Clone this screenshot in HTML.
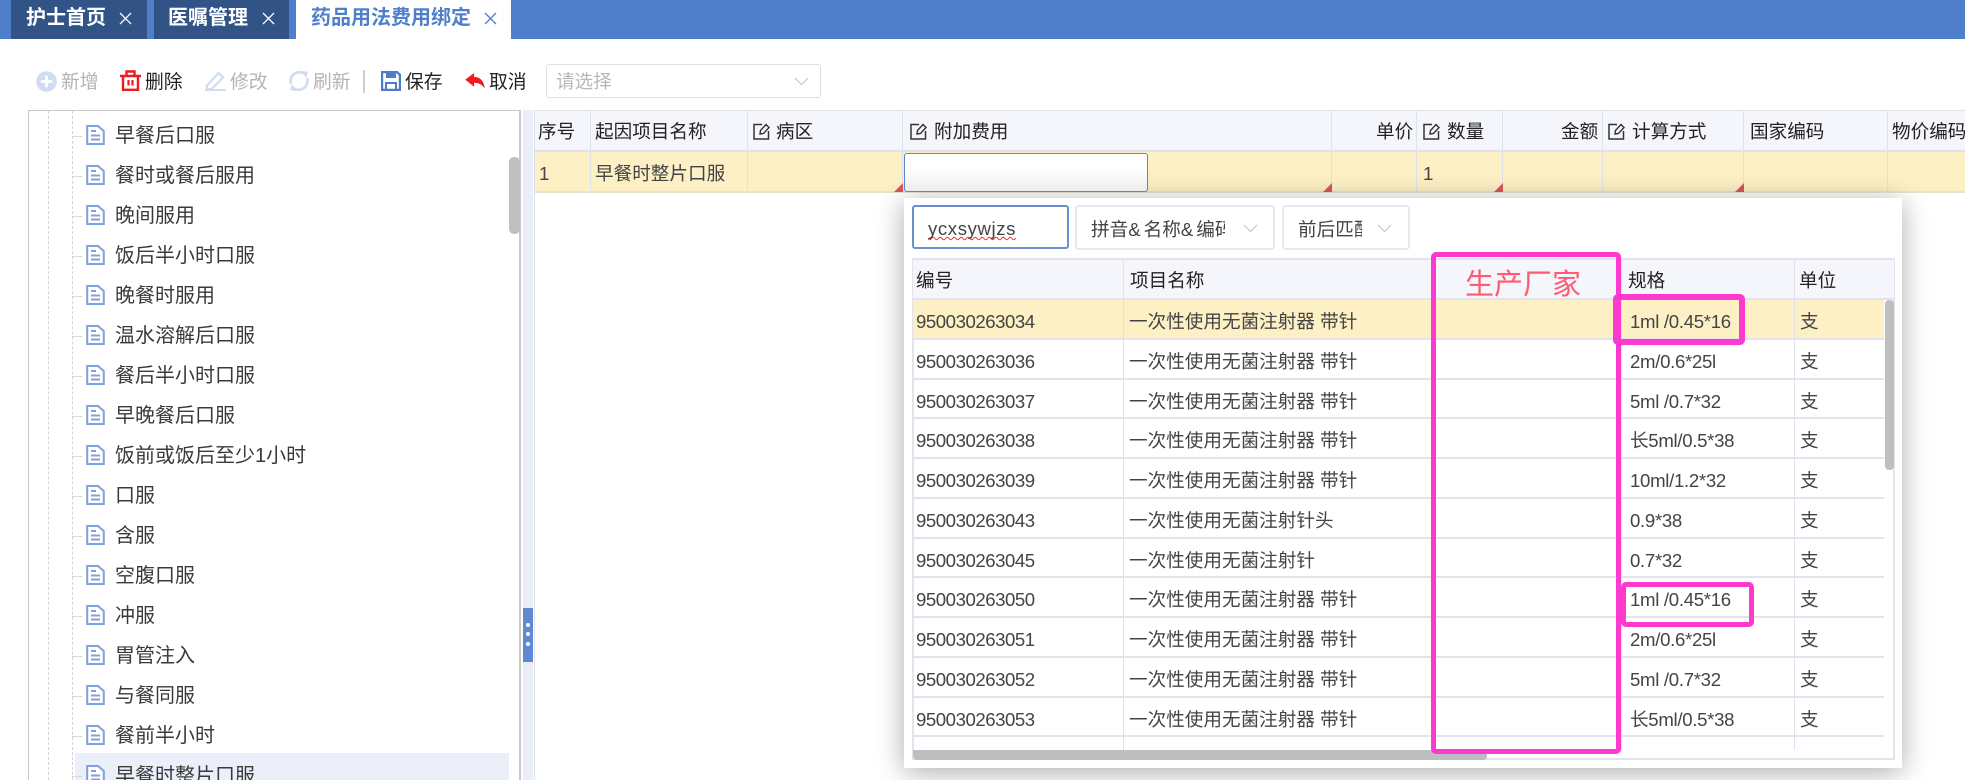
<!DOCTYPE html>
<html lang="zh"><head><meta charset="utf-8"><title>药品用法费用绑定</title>
<style>
html{margin:0;padding:0;width:1965px;height:780px;overflow:hidden;background:#fff}
body{margin:0;padding:0;background:#fff;position:relative;width:1965px;height:780px;overflow:hidden;font-family:"Liberation Sans","Noto Sans CJK SC",sans-serif;font-size:18.6px;color:#333}
div,span,svg{position:absolute;box-sizing:border-box}
i{font-style:normal;letter-spacing:3px}
.t{white-space:nowrap;line-height:24px;height:24px}
.tab{top:0;height:39px;background:#315385}
.tt{top:6px;font-size:20px;font-weight:700;color:#fff}
.tb{font-size:18.8px;top:70px}
.dis{color:#b4b4b4}
.tr{left:115px;font-size:20px;color:#3a3a3a}
.dv{width:0;border-left:1px dashed #d4d4d4}
.dh{left:72px;width:10px;height:0;border-top:1px dashed #d4d4d4}
.ic{left:86px;width:19px;height:20px}
.vl{width:1px;background:#dfe1eb}
.hd{top:120px;color:#222}
.c{top:162px;color:#444}
.red{width:0;height:0;border-style:solid;border-width:0 0 9px 9px;border-color:transparent transparent #d9565a transparent;top:183px}
.r{left:913px;width:971px;height:39.75px;border-bottom:2px solid #e2e3ec;color:#444}
.r span{top:10px;white-space:nowrap;line-height:24px;height:24px}
.a{left:3px;letter-spacing:-.45px}.b{left:216px}.d{left:717px;letter-spacing:-.3px}.e{left:887px}
.pk{border:5px solid #fd3ad0;border-radius:5px}
.sel{border:2px solid #e6e8ef;border-radius:4px;background:#fff}
</style></head><body>
<div style="left:0;top:0;width:1965px;height:39px;background:#4f7fcb"></div>
<div class="tab" style="left:11px;width:136px"></div>
<div class="tab" style="left:154px;width:135px"></div>
<div style="left:296px;top:0;width:215px;height:39px;background:#fff"></div>
<span class="t tt" style="left:26px">护士首页</span>
<span class="t tt" style="left:168px">医嘱管理</span>
<span class="t tt" style="left:311px;color:#4f7fcb">药品用法费用绑定</span>
<svg style="left:119px;top:12px" width="13" height="13" viewBox="0 0 13 13"><path d="M1 1L12 12M12 1L1 12" stroke="#fff" stroke-width="1.3"/></svg>
<svg style="left:262px;top:12px" width="13" height="13" viewBox="0 0 13 13"><path d="M1 1L12 12M12 1L1 12" stroke="#fff" stroke-width="1.3"/></svg>
<svg style="left:484px;top:12px" width="13" height="13" viewBox="0 0 13 13"><path d="M1 1L12 12M12 1L1 12" stroke="#4f7fcb" stroke-width="1.3"/></svg>

<svg style="left:36px;top:71px" width="21" height="21" viewBox="0 0 22 22"><circle cx="11" cy="11" r="10.8" fill="#cfdcf1"/><path d="M11 5V17M5 11H17" stroke="#fff" stroke-width="3"/></svg>
<span class="t tb dis" style="left:61px">新增</span>
<svg style="left:120px;top:70px" width="21" height="21" viewBox="0 0 21 21"><path d="M0 6H21M6.5 6V1.5H14.5V6M3 6V19.8H18V6" fill="none" stroke="#f0191e" stroke-width="2.4"/><path d="M8.5 10V15.5M12.5 10V15.5" stroke="#f0191e" stroke-width="2.2"/></svg>
<span class="t tb" style="left:145px;color:#222">删除</span>
<svg style="left:205px;top:71px" width="21" height="20" viewBox="0 0 21 20"><path d="M2 14.5L13.5 2L18 6.5L6.5 18L1.5 18.5Z" fill="none" stroke="#cfdcf1" stroke-width="2.2"/><path d="M0 19H21" stroke="#cfdcf1" stroke-width="2"/></svg>
<span class="t tb dis" style="left:230px">修改</span>
<svg style="left:288px;top:70px" width="22" height="22" viewBox="0 0 22 22"><path d="M3 14A9 9 0 0 1 17 4M19 8A9 9 0 0 1 5 18" fill="none" stroke="#cfdcf1" stroke-width="2.6"/><path d="M14 1L20 2L18 8ZM8 21L2 20L4 14Z" fill="#cfdcf1"/></svg>
<span class="t tb dis" style="left:313px">刷新</span>
<div style="left:363px;top:70px;width:2px;height:23px;background:#cfcfcf"></div>
<svg style="left:381px;top:71px" width="20" height="20" viewBox="0 0 20 20"><path d="M1 1H16L19 4V19H1Z" fill="none" stroke="#4f7cc6" stroke-width="2.4"/><rect x="5" y="1" width="10" height="6" fill="#4f7cc6"/><rect x="5" y="12" width="10" height="7" fill="none" stroke="#4f7cc6" stroke-width="2"/></svg>
<span class="t tb" style="left:405px;color:#222">保存</span>
<svg style="left:464px;top:73px" width="22" height="16" viewBox="0 0 22 18"><path d="M0 7.5L10 0V4.5C17 4.5 21 9 22 17.5C19 13 15 11 10 11V15.5Z" fill="#f3181d"/></svg>
<span class="t tb" style="left:489px;color:#222">取消</span>
<div style="left:546px;top:64px;width:275px;height:34px;border:1px solid #dcdfe6;border-radius:3px"></div>
<span class="t" style="left:556px;top:70px;color:#b8b8b8;font-size:18.6px">请选择</span>
<svg style="left:794px;top:77px" width="15" height="9" viewBox="0 0 15 9"><path d="M1 1L7.5 7.5L14 1" fill="none" stroke="#c4c7cf" stroke-width="1.2"/></svg>

<div style="left:28px;top:110px;width:493px;height:670px;border:1px solid #c9c9c9;border-width:1px 2px 0 1px"></div>
<div style="left:509px;top:157px;width:11px;height:77px;background:#bfbfbf;border-radius:5px"></div>
<div class="dv" style="left:48px;top:111px;height:669px"></div>
<div class="dv" style="left:72px;top:111px;height:669px"></div>
<div style="left:75px;top:753px;width:434px;height:27px;background:#ebeff9"></div>

<div class="dh" style="top:136px"></div><div class="dh" style="top:176px"></div><div class="dh" style="top:216px"></div><div class="dh" style="top:256px"></div><div class="dh" style="top:296px"></div><div class="dh" style="top:336px"></div><div class="dh" style="top:376px"></div><div class="dh" style="top:416px"></div><div class="dh" style="top:456px"></div><div class="dh" style="top:496px"></div><div class="dh" style="top:536px"></div><div class="dh" style="top:576px"></div><div class="dh" style="top:616px"></div><div class="dh" style="top:656px"></div><div class="dh" style="top:696px"></div><div class="dh" style="top:736px"></div><div class="dh" style="top:776px"></div>

<svg width="0" height="0" style="left:0;top:0"><defs><g id="f"><path d="M1.2 1H12L17.8 6V19H1.2Z" fill="#fff" stroke="#7fa1dd" stroke-width="2"/><path d="M5 6H10M5 10.5H14M5 14.5H14" stroke="#7fa1dd" stroke-width="2"/></g><g id="ed"><path d="M9 1.5H1V16H15.5V8" fill="none" stroke="#333" stroke-width="1.5"/><path d="M7 11L7.5 7.5L13 1.5L16 4.5L10.5 10.5Z" fill="none" stroke="#333" stroke-width="1.4"/></g></defs></svg>
<svg class="ic" style="top:125px" viewBox="0 0 19 20"><use href="#f"/></svg>
<svg class="ic" style="top:165px" viewBox="0 0 19 20"><use href="#f"/></svg>
<svg class="ic" style="top:205px" viewBox="0 0 19 20"><use href="#f"/></svg>
<svg class="ic" style="top:245px" viewBox="0 0 19 20"><use href="#f"/></svg>
<svg class="ic" style="top:285px" viewBox="0 0 19 20"><use href="#f"/></svg>
<svg class="ic" style="top:325px" viewBox="0 0 19 20"><use href="#f"/></svg>
<svg class="ic" style="top:365px" viewBox="0 0 19 20"><use href="#f"/></svg>
<svg class="ic" style="top:405px" viewBox="0 0 19 20"><use href="#f"/></svg>
<svg class="ic" style="top:445px" viewBox="0 0 19 20"><use href="#f"/></svg>
<svg class="ic" style="top:485px" viewBox="0 0 19 20"><use href="#f"/></svg>
<svg class="ic" style="top:525px" viewBox="0 0 19 20"><use href="#f"/></svg>
<svg class="ic" style="top:565px" viewBox="0 0 19 20"><use href="#f"/></svg>
<svg class="ic" style="top:605px" viewBox="0 0 19 20"><use href="#f"/></svg>
<svg class="ic" style="top:645px" viewBox="0 0 19 20"><use href="#f"/></svg>
<svg class="ic" style="top:685px" viewBox="0 0 19 20"><use href="#f"/></svg>
<svg class="ic" style="top:725px" viewBox="0 0 19 20"><use href="#f"/></svg>
<svg class="ic" style="top:765px" viewBox="0 0 19 20"><use href="#f"/></svg>

<span class="t tr" style="top:124px">早餐后口服</span>
<span class="t tr" style="top:164px">餐时或餐后服用</span>
<span class="t tr" style="top:204px">晚间服用</span>
<span class="t tr" style="top:244px">饭后半小时口服</span>
<span class="t tr" style="top:284px">晚餐时服用</span>
<span class="t tr" style="top:324px">温水溶解后口服</span>
<span class="t tr" style="top:364px">餐后半小时口服</span>
<span class="t tr" style="top:404px">早晚餐后口服</span>
<span class="t tr" style="top:444px">饭前或饭后至少1小时</span>
<span class="t tr" style="top:484px">口服</span>
<span class="t tr" style="top:524px">含服</span>
<span class="t tr" style="top:564px">空腹口服</span>
<span class="t tr" style="top:604px">冲服</span>
<span class="t tr" style="top:644px">胃管注入</span>
<span class="t tr" style="top:684px">与餐同服</span>
<span class="t tr" style="top:724px">餐前半小时</span>
<span class="t tr" style="top:764px">早餐时整片口服</span>

<div style="left:523px;top:110px;width:10px;height:670px;background:#e9eef8"></div>
<div style="left:523px;top:608px;width:10px;height:54px;background:#5f89d1"></div>
<div style="left:526px;top:623px;width:4px;height:4px;border-radius:50%;background:#fff"></div>
<div style="left:526px;top:632px;width:4px;height:4px;border-radius:50%;background:#fff"></div>
<div style="left:526px;top:642px;width:4px;height:4px;border-radius:50%;background:#fff"></div>
<div style="left:534px;top:110px;width:1px;height:670px;background:#dfe1eb"></div>

<div style="left:535px;top:110px;width:1430px;height:42px;background:#f4f6fb;border-top:1px solid #dfe1eb;border-bottom:2px solid #dfe1eb"></div>
<div style="left:535px;top:152px;width:1430px;height:41px;background:#fdf0c5;border-bottom:2px solid #e6e3d3"></div>
<div class="vl" style="left:590px;top:110px;height:83px"></div>
<div class="vl" style="left:747px;top:110px;height:83px"></div>
<div class="vl" style="left:902px;top:110px;height:83px"></div>
<div class="vl" style="left:1331px;top:110px;height:83px"></div>
<div class="vl" style="left:1416px;top:110px;height:83px"></div>
<div class="vl" style="left:1502px;top:110px;height:83px"></div>
<div class="vl" style="left:1602px;top:110px;height:83px"></div>
<div class="vl" style="left:1743px;top:110px;height:83px"></div>
<div class="vl" style="left:1887px;top:110px;height:83px"></div>
<span class="t hd" style="left:538px">序号</span>
<span class="t hd" style="left:595px">起因项目名称</span>
<svg style="left:753px;top:123px" width="17" height="17" viewBox="0 0 17 17"><use href="#ed"/></svg>
<span class="t hd" style="left:776px">病区</span>
<svg style="left:910px;top:123px" width="17" height="17" viewBox="0 0 17 17"><use href="#ed"/></svg>
<span class="t hd" style="left:934px">附加费用</span>
<span class="t hd" style="left:1376px">单价</span>
<svg style="left:1423px;top:123px" width="17" height="17" viewBox="0 0 17 17"><use href="#ed"/></svg>
<span class="t hd" style="left:1447px">数量</span>
<span class="t hd" style="left:1561px">金额</span>
<svg style="left:1608px;top:123px" width="17" height="17" viewBox="0 0 17 17"><use href="#ed"/></svg>
<span class="t hd" style="left:1632px">计算方式</span>
<span class="t hd" style="left:1750px">国家编码</span>
<span class="t hd" style="left:1892px">物价编码</span>
<span class="t c" style="left:539px">1</span>
<span class="t c" style="left:595px">早餐时整片口服</span>
<span class="t c" style="left:1423px">1</span>
<div class="red" style="left:894px"></div>
<div class="red" style="left:1323px"></div>
<div class="red" style="left:1494px"></div>
<div class="red" style="left:1735px"></div>

<div style="left:904px;top:198px;width:998px;height:570px;background:#fff;box-shadow:0 4px 26px rgba(0,0,0,.33)"></div>
<div style="left:904px;top:153px;width:244px;height:39px;border:1.5px solid #5b86cd;border-radius:3px;background:linear-gradient(#fff 40%,#ececec)"></div>

<div style="left:912px;top:205px;width:157px;height:44px;border:2px solid #6a90d0;border-radius:3px;background:#fff"></div>
<span class="t" style="left:928px;top:217px;letter-spacing:.6px;color:#444;text-decoration:underline wavy #e33;text-decoration-skip-ink:none;text-decoration-thickness:1px">ycxsywjzs</span>
<div class="sel" style="left:1075px;top:205px;width:200px;height:45px"></div>
<div style="left:1091px;top:218px;width:134px;height:24px;overflow:hidden"><span class="t" style="left:0;top:0;color:#444">拼音<i>&amp;</i>名称<i>&amp;</i>编码</span></div>
<svg style="left:1243px;top:224px" width="15" height="9" viewBox="0 0 15 9"><path d="M1 1L7.5 7.5L14 1" fill="none" stroke="#c4c7cf" stroke-width="1.2"/></svg>
<div class="sel" style="left:1282px;top:205px;width:128px;height:45px"></div>
<div style="left:1298px;top:218px;width:64px;height:24px;overflow:hidden"><span class="t" style="left:0;top:0;color:#444">前后匹配</span></div>
<svg style="left:1377px;top:224px" width="15" height="9" viewBox="0 0 15 9"><path d="M1 1L7.5 7.5L14 1" fill="none" stroke="#c4c7cf" stroke-width="1.2"/></svg>

<div style="left:912px;top:258px;width:983px;height:502px;border:2px solid #e2e3ec"></div>
<div style="left:913px;top:260px;width:981px;height:40px;background:#f4f6fb;border-bottom:2px solid #e2e3ec"></div>
<span class="t" style="left:916px;top:269px;color:#222">编号</span>
<span class="t" style="left:1130px;top:269px;color:#222">项目名称</span>
<span class="t" style="left:1628px;top:269px;color:#222">规格</span>
<span class="t" style="left:1799px;top:269px;color:#222">单位</span>

<div class="r" style="top:300px;background:#fdf0c5"><span class="a">950030263034</span><span class="b">一次性使用无菌注射器 带针</span><span class="d">1ml /0.45*16</span><span class="e">支</span></div>
<div class="r" style="top:339.75px"><span class="a">950030263036</span><span class="b">一次性使用无菌注射器 带针</span><span class="d">2m/0.6*25l</span><span class="e">支</span></div>
<div class="r" style="top:379.5px"><span class="a">950030263037</span><span class="b">一次性使用无菌注射器 带针</span><span class="d">5ml /0.7*32</span><span class="e">支</span></div>
<div class="r" style="top:419.25px"><span class="a">950030263038</span><span class="b">一次性使用无菌注射器 带针</span><span class="d">长5ml/0.5*38</span><span class="e">支</span></div>
<div class="r" style="top:459px"><span class="a">950030263039</span><span class="b">一次性使用无菌注射器 带针</span><span class="d">10ml/1.2*32</span><span class="e">支</span></div>
<div class="r" style="top:498.75px"><span class="a">950030263043</span><span class="b">一次性使用无菌注射针头</span><span class="d">0.9*38</span><span class="e">支</span></div>
<div class="r" style="top:538.5px"><span class="a">950030263045</span><span class="b">一次性使用无菌注射针</span><span class="d">0.7*32</span><span class="e">支</span></div>
<div class="r" style="top:578.25px"><span class="a">950030263050</span><span class="b">一次性使用无菌注射器 带针</span><span class="d">1ml /0.45*16</span><span class="e">支</span></div>
<div class="r" style="top:618px"><span class="a">950030263051</span><span class="b">一次性使用无菌注射器 带针</span><span class="d">2m/0.6*25l</span><span class="e">支</span></div>
<div class="r" style="top:657.75px"><span class="a">950030263052</span><span class="b">一次性使用无菌注射器 带针</span><span class="d">5ml /0.7*32</span><span class="e">支</span></div>
<div class="r" style="top:697.5px"><span class="a">950030263053</span><span class="b">一次性使用无菌注射器 带针</span><span class="d">长5ml/0.5*38</span><span class="e">支</span></div>
<div class="vl" style="left:1123px;top:260px;height:490px"></div>
<div class="vl" style="left:1621px;top:260px;height:490px"></div>
<div class="vl" style="left:1794px;top:260px;height:490px"></div>

<div style="left:1885px;top:300px;width:9px;height:170px;background:#bfbfbf;border-radius:4px"></div>
<div style="left:913px;top:750px;width:574px;height:10px;background:#bdbec0;border-radius:0 0 4px 4px"></div>

<div class="pk" style="left:1431px;top:252px;width:190px;height:502px"></div>
<div class="pk" style="left:1613px;top:294px;width:132px;height:51px;border-width:6px"></div>
<div class="pk" style="left:1621px;top:582px;width:133px;height:45px"></div>
<span class="t" style="left:1465px;top:270px;font-size:29px;line-height:30px;height:30px;color:#ff5a70">生产厂家</span>
</body></html>
